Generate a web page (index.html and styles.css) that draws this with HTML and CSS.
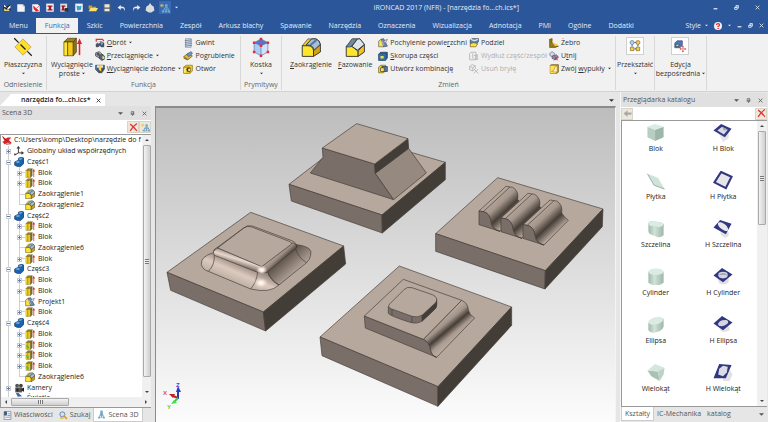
FILE: index.html
```html
<!DOCTYPE html>
<html lang="pl">
<head>
<meta charset="utf-8">
<title>IRONCAD 2017</title>
<link rel="stylesheet" href="styles.css">
</head>
<body>
<svg class="sprite" aria-hidden="true">
  <symbol id="app" viewBox="0 0 16 16"><path d="M1 2l6 4 7-4-1 6 2 5H2z" fill="#222"/><path d="M2 2l6 6-5-1zM9 9l5-5v5l-6 3z" fill="#fff"/><path d="M3 9l4 3 5-1v3H3z" fill="#e8d37b"/></symbol>
  <symbol id="doc" viewBox="0 0 16 16"><path d="M2 2h9l3 3v9H2z" fill="#f5f5f5"/><path d="M11 2v3h3" fill="none" stroke="#aaa"/></symbol>
  <symbol id="docred" viewBox="0 0 16 16"><path d="M2 2h9l3 3v9H2z" fill="#f5f5f5"/><path d="M4 5l8 7-4 1-3-3zM9 8l4-3" stroke="#d22" fill="#d22"/></symbol>
  <symbol id="doci" viewBox="0 0 16 16"><path d="M2 1h12v13H2z" fill="#f5f5f5"/><path d="M4 4h8v2h-2v4h2v2H4v-2h2V6H4z" fill="#a01722"/></symbol>
  <symbol id="dock" viewBox="0 0 16 16"><path d="M2 1h11v13H2z" fill="#ddd"/><path d="M4 4h6v2H8v4h2v2H4v-2h1V6H4z" fill="#a01722"/><path d="M9 8h6v6H9z" fill="#333"/></symbol>
  <symbol id="docblue" viewBox="0 0 16 16"><path d="M2 1h12v13H2z" fill="#f5f5f5"/><path d="M4 4l5 1 3-1-1 7-6 1z" fill="#37a0d0"/></symbol>
  <symbol id="open" viewBox="0 0 16 16"><path d="M1 4h5l1 2h6v3H1z" fill="#d99a1e"/><path d="M4 8h12l-3 5H1z" fill="#ffe069"/></symbol>
  <symbol id="save" viewBox="0 0 16 16"><path d="M2 1h12v14H2z" fill="#555b66"/><path d="M4 2h8v5H4zM4 9h8v4H4z" fill="#e8e8e8"/></symbol>
  <symbol id="undo" viewBox="0 0 16 16"><path d="M6 3L1 7l5 4V8.500h3q3 0 3 5 3-8-6-8z" fill="#e9edf5"/></symbol>
  <symbol id="redo" viewBox="0 0 16 16"><path d="M10 3l5 4-5 4V8.500H7q-3 0-3 5-3-8 6-8z" fill="#e9edf5"/></symbol>
  <symbol id="drop" viewBox="0 0 16 16"><path d="M8 0q2 4 6 6l1 6-5 3H6l-5-3 1-6q5-2 6-6z" fill="#dcdcdc"/></symbol>
  <symbol id="tree" viewBox="0 0 16 16"><path d="M10 3v4M8 7h4M8 7l-3 6M12 7l3 6M10 7v7M6 10h8" stroke="#6f9fc4" stroke-width="1.500" fill="none"/><path d="M8 2h4v4H8zM3 12h4v3H3zM12 12h4v3h-4zM8 12h3v3H8z" fill="#76a9cd"/><path d="M3 1v6M0 4h6M1 2l4 4M5 2L1 6" stroke="#f0c23c"/></symbol>
  <symbol id="plane" viewBox="0 0 32 32"><path d="M16 3l13 13-13 13L3 16z" fill="#ffdf2e" stroke="#c2a75c" stroke-width="1.500"/><path d="M2 2l7 7M12 12l8 8M23 23l7 7" stroke="#1e1e1e" stroke-width="2"/></symbol>
  <symbol id="block" viewBox="0 0 32 32"><path d="M3 8l6-6h14l-5 6z" fill="#9b8418" stroke="#42380c"/><path d="M3 8h6v22H3z" fill="#ffe838" stroke="#42380c"/><path d="M9 8h9v22H9z" fill="#f5ca20" stroke="#42380c"/><path d="M18 8l5-6v22l-5 6z" fill="#8c7418" stroke="#42380c"/><path d="M28 29V8" stroke="#e3242b" stroke-width="2.500"/><path d="M24 11l4-9 4 9z" fill="#e3242b"/></symbol>
  <symbol id="blockg" viewBox="0 0 32 32"><use href="#block"/><path d="M4 15l8 6v6l-8-3z" fill="#4eb95c"/></symbol>
  <symbol id="cube" viewBox="0 0 32 32"><path d="M5 9l11 5v16L5 24z" fill="#a9cdf6"/><path d="M16 14l11-5v15l-11 6z" fill="#cfe2fb"/><path d="M5 9l11-6 11 6-11 5z" fill="#5674cc"/><path d="M5 9l11-6 11 6-11 5zM5 9v15l11 6 11-6V9M16 14v16" fill="none" stroke="#5b6b9b"/><path d="M3 7h4v4H3zM14 1h4v4h-4zM25 7h4v4h-4zM14 12h4v4h-4zM14 28h4v4h-4zM3 22h4v4H3zM25 22h4v4h-4z" fill="#e22c38"/></symbol>
  <symbol id="round" viewBox="0 0 32 32"><path d="M2 14L11 3h13q6 2 7 9l-7 8z" fill="#ecc92f" stroke="#333"/><path d="M2 14h9q8 0 9 8v9H2z" fill="#ffe62c" stroke="#333" stroke-width="1.500"/><path d="M8 13L17 3h7q6 2 7 9L21 22q-1-8-8-9z" fill="#a9bed0" stroke="#333" stroke-width="1.500"/><path d="M14 12l9-8 3 2-9 7z" fill="#4c79a4"/><path d="M20 22l11-10v12l-11 7z" fill="#d5a214" stroke="#333" stroke-width="1.500"/></symbol>
  <symbol id="chamfer" viewBox="0 0 32 32"><path d="M2 15L12 3h12l7 9-10 9z" fill="#f7d83b" stroke="#333"/><path d="M2 15h9l10 8v8H2z" fill="#ffe62c" stroke="#333" stroke-width="1.500"/><path d="M11 3h9L9 16H2z" fill="#6c8bac" stroke="#333"/><path d="M20 3h4l7 9-11 9-9-6z" fill="#dce5ea" stroke="#333" stroke-width="1.500"/><path d="M21 22l10-10v12l-10 7z" fill="#f0c41c" stroke="#333" stroke-width="1.500"/></symbol>
  <symbol id="revolve" viewBox="0 0 16 16"><path d="M2 6V2h10l2 3" fill="none" stroke="#d33" stroke-width="2"/><path d="M2 10q5-7 12-2v6h-4q-2-4-5 0H2z" fill="#3b5676" stroke="#222"/><path d="M9 7h4l-2 5z" fill="#9fb8cf"/><path d="M4 7l4-2 1 2-4 2z" fill="#e7ebef"/></symbol>
  <symbol id="sweep" viewBox="0 0 16 16"><path d="M1 3l6-2 5 5-5 5-6-3z" fill="#b7bcc0" stroke="#222"/><circle cx="5" cy="5" r="2.500" fill="#555"/><path d="M7 7l4-2 4 3v5l-4 2-4-3z" fill="#4c6a94" stroke="#222"/><path d="M12 8l3 1v3l-3 1z" fill="#ffe24c"/></symbol>
  <symbol id="loft" viewBox="0 0 16 16"><path d="M1 2h14v6l-4 6H6L1 9z" fill="#3e5372" stroke="#333"/><path d="M3 2h10v4H3z" fill="#dfe5ea"/><path d="M6 3h4v9L6 9z" fill="#ffda31"/><path d="M2 3v6l3 3" stroke="#6f97d0" fill="none"/></symbol>
  <symbol id="thread" viewBox="0 0 16 16"><path d="M4 1h9v14H4z" fill="#e6ebf3" stroke="#7b89a4"/><path d="M3 4l11-1M3 7l11-1M3 10l11-1M3 13l11-1" stroke="#62799f" stroke-width="1.500"/></symbol>
  <symbol id="thick" viewBox="0 0 16 16"><path d="M1 9l7-5 7 4-7 6z" fill="#ddb938" stroke="#5d4b12"/><path d="M6 5l7-4 2 3-6 5z" fill="#6e9ad1" stroke="#345"/><path d="M1 9v3l6 3 1-2z" fill="#8c741c"/></symbol>
  <symbol id="hole" viewBox="0 0 16 16"><path d="M1 5l4-3h10v9l-4 4H1z" fill="#f3cd25" stroke="#7d6710"/><path d="M1 5h10v10" fill="none" stroke="#7d6710"/><circle cx="9" cy="9" r="3.500" fill="#40381c"/><circle cx="10" cy="9" r="2" fill="#ffe974"/><path d="M3 7v7" stroke="#fff7a8" stroke-width="2"/></symbol>
  <symbol id="draft" viewBox="0 0 16 16"><path d="M1 5l4-3 3 3 1 9H1z" fill="#ffe04a" stroke="#555"/><path d="M5 2l4-1 6 12-6 1z" fill="#6489b6" stroke="#445"/><path d="M9 5l6-3-3 6z" fill="#e8f0f6" stroke="#667"/><path d="M6 4l3 8" stroke="#dfe9f2"/></symbol>
  <symbol id="shell" viewBox="0 0 16 16"><path d="M1 5l3-3h11v9l-3 4H1z" fill="#26598f" stroke="#17324d"/><path d="M1 5h11v10H1z" fill="#346fa4"/><path d="M4 8h5v4H4z" fill="#f5dc4e"/></symbol>
  <symbol id="combine" viewBox="0 0 16 16"><path d="M1 5l3-3h8v9l-3 3H1z" fill="#ffdb2b" stroke="#5a4a10"/><path d="M6 4h9v8H8z" fill="#4d78ae" stroke="#234"/><path d="M4 6h6v6H4z" fill="#f5e06a" stroke="#333"/></symbol>
  <symbol id="split" viewBox="0 0 16 16"><path d="M2 3l3-2h10v5l-3 3H2z" fill="#5a83b8" stroke="#234"/><path d="M3 2q6 4 11 0" stroke="#dfe9f5" fill="none" stroke-width="2"/><path d="M2 9q5-3 12 0l-3 5H2z" fill="#ffe14b" stroke="#66540f"/></symbol>
  <symbol id="extend" viewBox="0 0 16 16"><path d="M3 2h8v12H1V4zM6 4v8M8 7h5l-4 6h6M13 5v8" fill="none" stroke="#b9b9b9" stroke-width="1.500"/></symbol>
  <symbol id="delbody" viewBox="0 0 16 16"><path d="M1 4l4-3 5 2v5l-4 3-5-2zM1 4l5 2 4-3M6 6v5M8 8l7 7M15 8l-7 7" fill="none" stroke="#b9b9b9" stroke-width="1.500"/></symbol>
  <symbol id="rib" viewBox="0 0 16 16"><path d="M1 2l4-1v8l4 3 6 1-5 2H1z" fill="#9a8218" stroke="#4b3f10"/><path d="M5 3q2 6 8 7l2 2-5 1-5-4z" fill="#f3cd35"/><path d="M3 4l5 9" stroke="#556"/></symbol>
  <symbol id="trim" viewBox="0 0 16 16"><path d="M1 4l4-3 4 3-2 5-5-1z" fill="#d7dce8" stroke="#57607d"/><path d="M5 8l7-2 3 4-4 4-6-2z" fill="#8491b4" stroke="#3f4769"/><path d="M9 9l5 6M14 9l-6 6" stroke="#cc2b37" stroke-width="1.500"/></symbol>
  <symbol id="emboss" viewBox="0 0 16 16"><path d="M2 2l2-1h11v12l-3 2H2z" fill="#c8961e" stroke="#5e4710"/><path d="M2 3h9v12H2z" fill="#ffe05a"/><path d="M4 12Q9 11 10 4l3-1v10z" fill="#fff8c4" stroke="#aa8a22"/></symbol>
  <symbol id="transform" viewBox="0 0 24 24"><circle cx="7" cy="6" r="3.500" fill="#b7cff0" stroke="#47618e"/><circle cx="17" cy="6" r="3.500" fill="#f5cf45" stroke="#6e5614"/><path d="M4 14h6v6H4zM14 14h6v6h-6z" fill="#f5cf45" stroke="#6e5614"/><path d="M11 6h3M7 10v3M17 10v3M11 17h3" stroke="#4368a1" stroke-width="2"/></symbol>
  <symbol id="direct" viewBox="0 0 24 24"><path d="M3 7l4-4h9v8l-4 4H3z" fill="#4e78bd" stroke="#263e68"/><path d="M5 9h5v4H5z" fill="#dcd267" stroke="#263e68"/><path d="M17 12v10M12 17h10" stroke="#d64c4c"/><path d="M15 14l2-3 2 3zM15 20l2 3 2-3zM14 15l-3 2 3 2zM20 15l3 2-3 2z" fill="#d64c4c"/></symbol>
  <symbol id="root" viewBox="0 0 16 16"><path d="M0 2l6 4 3-2 6 0-4 4 5 5-7-1-5 3-2-3-2-1 4-2z" fill="#e01e24"/><path d="M1 2l7 8M9 12l5 2-7 1z" stroke="#801015" fill="#fff"/></symbol>
  <symbol id="axes" viewBox="0 0 16 16"><path d="M7 11V3M7 11h7M7 11l-5 3" stroke="#333" stroke-width="1.500"/><path d="M4 4l3-4 3 4zM12 8l4 3-4 3zM0 15l1-4 3 3z" fill="#333"/></symbol>
  <symbol id="part" viewBox="0 0 16 16"><path d="M1 8l6-3V2l5-2 4 2v8l-5 5H5l-4-2z" fill="#1c62a8" stroke="#123c6e"/><path d="M7 3l4-2 3 1-4 3zM2 8l5-2 3 2-4 2z" fill="#67a7df"/></symbol>
  <symbol id="camera" viewBox="0 0 16 16"><circle cx="5" cy="4" r="3" fill="#555"/><circle cx="11" cy="4" r="3" fill="#444"/><path d="M2 7h11v8H2z" fill="#555"/><path d="M12 9l4-2v7l-4-2zM4 9h3v4H4z" fill="#222"/></symbol>
  <symbol id="light" viewBox="0 0 16 16"><path d="M3 0h4l6 5-7 1z" fill="#3768ad"/></symbol>
  <symbol id="props" viewBox="0 0 16 16"><path d="M2 1h12v14H2z" fill="#f9f9f9" stroke="#4b6387"/><path d="M2 1h5v7H2z" fill="#3f5874"/><path d="M8 5h5M8 8h5M4 11h9" stroke="#557"/></symbol>
  <symbol id="search" viewBox="0 0 16 16"><circle cx="6" cy="6" r="4.500" fill="#cfe3f5" stroke="#587da5" stroke-width="1.500"/><path d="M8 8l6 6" stroke="#d69b2b" stroke-width="3"/><path d="M2 11h6v3H2z" fill="#e6b84e"/></symbol>
  <symbol id="scene" viewBox="0 0 16 16"><path d="M8 2L4 14M8 2l4 12M8 2v12M5 9h6" stroke="#6798bd" stroke-width="1.500" fill="none"/><path d="M6 1h4v5H6zM2 12h4v3H2zM10 12h4v3h-4z" fill="#76a9cd"/></symbol>
  <symbol id="redx" viewBox="0 0 16 16"><path d="M2 2q6 4 12 12M14 1Q7 6 2 14" stroke="#e03434" stroke-width="2.200" fill="none"/></symbol>
  <symbol id="down" viewBox="0 0 8 8"><path d="M0 2h8L4 6z" fill="currentColor"/></symbol>
  <symbol id="up" viewBox="0 0 8 8"><path d="M0 6h8L4 2z" fill="currentColor"/></symbol>
  <symbol id="left" viewBox="0 0 8 8"><path d="M6 0v8L2 4z" fill="currentColor"/></symbol>
  <symbol id="right" viewBox="0 0 8 8"><path d="M2 0v8l4-4z" fill="currentColor"/></symbol>
  <symbol id="pin" viewBox="0 0 8 8"><path d="M2 1h4v4H2zM1 5h6M4 5v3M5 1v4" fill="none" stroke="currentColor"/></symbol>
  <symbol id="close" viewBox="0 0 8 8"><path d="M1 1l6 6M7 1L1 7" stroke="currentColor" stroke-width="1.300"/></symbol>
  <symbol id="min" viewBox="0 0 8 8"><path d="M1 6h6" stroke="currentColor" stroke-width="2"/></symbol>
  <symbol id="restore" viewBox="0 0 8 8"><path d="M1 4h4v3H1zM3 4V1h4v4H5M1 4h4M3 1.500h4" fill="none" stroke="currentColor" stroke-width="1.300"/></symbol>
  <symbol id="help" viewBox="0 0 16 16"><circle cx="8" cy="8" r="8" fill="#eef0f5"/><path d="M5 6q0-3 3-3t3 3q0 2-3 3v1" fill="none" stroke="#e02c2c" stroke-width="2.500"/><path d="M7 12h3v2H7z" fill="#e02c2c"/></symbol>
  <symbol id="back" viewBox="0 0 16 16"><path d="M8 2v4h7v4H8v4L1 8z" fill="#a9a9a9"/></symbol>
  <linearGradient id="mint"><stop offset="0" stop-color="#a2b9ae"/><stop offset=".4" stop-color="#d0e2d9"/><stop offset="1" stop-color="#9db5a9"/></linearGradient>
  <symbol id="s-block" viewBox="0 0 20 20"><path d="M1 4l8 3v12l-8-4z" fill="#b7cec2"/><path d="M9 7l9-3v11l-9 4z" fill="#9db6aa"/><path d="M1 4l8-3 9 3-9 3z" fill="#d9ebe2"/></symbol>
  <symbol id="s-plate" viewBox="0 0 20 20"><path d="M1 3l11 4 7 12-11-4z" fill="#cfe3d9"/><path d="M1 3l7 12 11 4" fill="none" stroke="#95aea2"/></symbol>
  <symbol id="s-slot" viewBox="0 0 20 20"><path d="M2 5q0-3 5-3l9 2q3 1 2 4v9q-3 3-7 2l-7-3q-2-1-2-3z" fill="url(#mint)"/><path d="M2 5q1-3 5-3l9 2q3 1 1 3-3 2-7 1L4 7Q2 6 2 5z" fill="#d9ebe2"/></symbol>
  <symbol id="s-cyl" viewBox="0 0 20 20"><path d="M2 5v11q2 3 8 3t8-3V5z" fill="url(#mint)"/><ellipse cx="10" cy="5" rx="8" ry="3.500" fill="#d9ebe2"/></symbol>
  <symbol id="s-ell" viewBox="0 0 20 20"><path d="M2 8v8q3 4 9 2t7-6V4z" fill="url(#mint)"/><ellipse cx="10" cy="6" rx="8.200" ry="3.800" transform="rotate(-14 10 6)" fill="#d9ebe2"/></symbol>
  <symbol id="s-poly" viewBox="0 0 20 20"><path d="M1 8l11 1 2 10-9-5z" fill="#a9c2b5"/><path d="M1 8l8-7 10 4-7 4z" fill="#d4e7dd"/><path d="M12 9l7-4-1 7-4 7z" fill="#bdd3c8"/></symbol>
  <symbol id="h-block" viewBox="0 0 20 20"><path d="M6 12l10-4v8l-6 4z" fill="#e4e4e8"/><path d="M0 8l8-7 11 5-7 9z" fill="#333681"/><path d="M4 8l5-4 6 3-4 5z" fill="#d8dbe4"/><path d="M9 4l6 3-4 1z" fill="#9aa0b8"/></symbol>
  <symbol id="h-plate" viewBox="0 0 20 20"><path d="M1 12L8 1l11 5-6 12z" fill="#e4e6ea" stroke="#333681" stroke-width="2.200"/></symbol>
  <symbol id="h-slot" viewBox="0 0 20 20"><path d="M7 12l9 2v4l-4 2-4-3z" fill="#e2e2e6"/><path d="M0 9l7-8 12 4-6 11z" fill="#333681"/><ellipse cx="10" cy="8" rx="6.500" ry="3" transform="rotate(38 10 8)" fill="#e5e7ec"/></symbol>
  <symbol id="h-cyl" viewBox="0 0 20 20"><path d="M4 11h12v5q-5 4-10 1z" fill="#dfdfe3"/><path d="M0 9l9-8 11 7-10 8z" fill="#333681"/><ellipse cx="10" cy="8.500" rx="5" ry="3.500" fill="#d3d6de"/><path d="M5 9q5-5 10 0-5-2-10 0z" fill="#8c90a0"/></symbol>
  <symbol id="h-ell" viewBox="0 0 20 20"><path d="M5 12h12v4q-5 3-9 1z" fill="#e3e3e7"/><path d="M0 9l9-8 11 7-10 8z" fill="#333681"/><ellipse cx="10" cy="8.500" rx="5.500" ry="3" transform="rotate(-18 10 8)" fill="#d3d6de"/></symbol>
  <symbol id="h-poly" viewBox="0 0 20 20"><path d="M10 10l7-3 3 5-3 7-7 0z" fill="#e0e0e5"/><path d="M0 16L6 1l13 1-6 14z" fill="#333681"/><path d="M5 12l1-6 4-3 5 1-1 6-4 4z" fill="#dadde5"/></symbol>
</svg>

<div class="app">
  <header class="title-bar">
    <div class="quick">
      <svg><use href="#app"/></svg>
      <button aria-label="Nowy"><svg><use href="#doc"/></svg></button>
      <button aria-label="Nowa scena"><svg><use href="#docred"/></svg></button>
      <button aria-label="Nowy rysunek"><svg><use href="#doci"/></svg></button>
      <button aria-label="Szablon"><svg><use href="#dock"/></svg></button>
      <button aria-label="Importuj"><svg><use href="#docblue"/></svg></button>
      <button aria-label="Otwórz"><svg><use href="#open"/></svg></button>
      <button aria-label="Zapisz"><svg><use href="#save"/></svg></button>
      <button aria-label="Cofnij"><svg><use href="#undo"/></svg></button>
      <button aria-label="Ponów"><svg><use href="#redo"/></svg></button>
      <button aria-label="Styl"><svg><use href="#drop"/></svg></button>
      <button class="on" aria-label="Drzewo sceny"><svg><use href="#tree"/></svg></button>
      <button class="more" aria-label="Więcej"><svg class="tiny"><use href="#down"/></svg></button>
    </div>
    <h1>IRONCAD 2017 (NFR) - [narzędzia fo...ch.ics*]</h1>
    <div class="window-buttons">
      <button aria-label="Minimalizuj"><svg><use href="#min"/></svg></button>
      <button aria-label="Przywróć"><svg><use href="#restore"/></svg></button>
      <button aria-label="Zamknij"><svg><use href="#close"/></svg></button>
    </div>
  </header>

  <nav class="tabs">
    <button>Menu</button><button class="active">Funkcja</button><button>Szkic</button><button>Powierzchnia</button><button>Zespół</button><button>Arkusz blachy</button><button>Spawanie</button><button>Narzędzia</button><button>Oznaczenia</button><button>Wizualizacja</button><button>Adnotacja</button><button>PMI</button><button>Ogólne</button><button>Dodatki</button>
    <div class="tab-tools">
      <button>Style <svg class="tiny"><use href="#down"/></svg></button>
      <button aria-label="Pomoc"><svg class="help"><use href="#help"/></svg></button>
      <button aria-label="Opcje pomocy"><svg class="tiny"><use href="#down"/></svg></button>
      <button aria-label="Minimalizuj dokument"><svg class="small"><use href="#min"/></svg></button>
      <button aria-label="Przywróć dokument"><svg class="small"><use href="#restore"/></svg></button>
      <button aria-label="Zamknij dokument"><svg class="small"><use href="#close"/></svg></button>
    </div>
  </nav>

  <section class="ribbon">
    <div class="group g-ref">
      <div class="tools"><button class="big"><svg><use href="#plane"/></svg>Płaszczyzna<svg class="tiny"><use href="#down"/></svg></button></div>
      <h2>Odniesienie</h2>
    </div>
    <div class="group g-feature">
      <div class="tools">
        <button class="big"><svg><use href="#block"/></svg>Wyciągnięcie<span>proste <svg class="tiny"><use href="#down"/></svg></span></button>
        <div class="stack">
          <button><svg><use href="#revolve"/></svg><span><u>O</u>brót</span><svg class="tiny"><use href="#down"/></svg></button>
          <button><svg><use href="#sweep"/></svg><span><u>P</u>rzeciągnięcie</span><svg class="tiny"><use href="#down"/></svg></button>
          <button><svg><use href="#loft"/></svg><span><u>W</u>yciągnięcie złożone</span><svg class="tiny"><use href="#down"/></svg></button>
        </div>
        <div class="stack">
          <button><svg><use href="#thread"/></svg>Gwint</button>
          <button><svg><use href="#thick"/></svg>Pogrubienie</button>
          <button><svg><use href="#hole"/></svg>Otwór</button>
        </div>
      </div>
      <h2>Funkcja</h2>
    </div>
    <div class="group g-prim">
      <div class="tools"><button class="big"><svg><use href="#cube"/></svg>Kostka<svg class="tiny"><use href="#down"/></svg></button></div>
      <h2>Prymitywy</h2>
    </div>
    <div class="group g-change">
      <div class="tools">
        <button class="big"><svg><use href="#round"/></svg><span><u>Z</u>aokrąglenie</span></button>
        <button class="big"><svg><use href="#chamfer"/></svg><span><u>F</u>azowanie</span></button>
        <div class="stack">
          <button><svg><use href="#draft"/></svg><span>Pochylenie powie<u>r</u>zchni</span></button>
          <button><svg><use href="#shell"/></svg><span><u>S</u>korupa części</span></button>
          <button><svg><use href="#combine"/></svg><span>Utwórz kombinację</span></button>
        </div>
        <div class="stack">
          <button><svg><use href="#split"/></svg>Podziel</button>
          <button disabled><svg><use href="#extend"/></svg>Wydłuż część/zespół</button>
          <button disabled><svg><use href="#delbody"/></svg>Usuń bryłę</button>
        </div>
        <div class="stack">
          <button><svg><use href="#rib"/></svg>Żebro</button>
          <button><svg><use href="#trim"/></svg><span>U<u>t</u>nij</span></button>
          <button><svg><use href="#emboss"/></svg><span>Zwój <u>w</u>ypukły</span><svg class="tiny"><use href="#down"/></svg></button>
        </div>
      </div>
      <h2>Zmień</h2>
    </div>
    <div class="group g-trans"><div class="tools"><button class="big boxed"><svg><use href="#transform"/></svg>Przekształć<svg class="tiny"><use href="#down"/></svg></button></div></div>
    <div class="group g-direct"><div class="tools"><button class="big boxed"><svg><use href="#direct"/></svg>Edycja<span>bezpośrednia<svg class="tiny"><use href="#down"/></svg></span></button></div></div>
  </section>

  <main>
    <div class="doc-bar">
      <div class="doc-tab"><span>narzędzia fo...ch.ics*</span><button aria-label="Zamknij kartę"><svg class="small"><use href="#close"/></svg></button></div>
      <button class="doc-list" aria-label="Lista dokumentów"><svg class="small"><use href="#down"/></svg></button>
    </div>

    <aside class="pane scene-pane">
      <header><h2>Scena 3D</h2><svg class="small"><use href="#down"/></svg><svg class="small"><use href="#pin"/></svg><svg class="small"><use href="#close"/></svg></header>
      <div class="filter"><input aria-label="Filtruj scenę"><button aria-label="Wyczyść"><svg><use href="#redx"/></svg></button><button aria-label="Drzewo"><svg><use href="#tree"/></svg></button></div>
      <div class="tree-box">
        <ul class="tree">
          <li class="l0"><svg><use href="#root"/></svg>C:\Users\komp\Desktop\narzędzie do f</li>
          <li class="l1 first"><i class="plus"></i><svg><use href="#axes"/></svg>Globalny układ współrzędnych</li>
          <li class="l1"><i></i><svg><use href="#part"/></svg>Część1</li>
          <li class="l2"><i class="plus"></i><svg><use href="#block"/></svg>Blok</li>
          <li class="l2"><i class="plus"></i><svg><use href="#block"/></svg>Blok</li>
          <li class="l2"><svg><use href="#round"/></svg>Zaokrąglenie1</li>
          <li class="l2 last"><svg><use href="#round"/></svg>Zaokrąglenie2</li>
          <li class="l1"><i></i><svg><use href="#part"/></svg>Część2</li>
          <li class="l2"><i class="plus"></i><svg><use href="#block"/></svg>Blok</li>
          <li class="l2"><i class="plus"></i><svg><use href="#block"/></svg>Blok</li>
          <li class="l2"><svg><use href="#round"/></svg>Zaokrąglenie6</li>
          <li class="l2 last"><i class="plus"></i><svg><use href="#block"/></svg>Blok</li>
          <li class="l1"><i></i><svg><use href="#part"/></svg>Część3</li>
          <li class="l2"><i class="plus"></i><svg><use href="#block"/></svg>Blok</li>
          <li class="l2"><i class="plus"></i><svg><use href="#block"/></svg>Blok</li>
          <li class="l2"><svg><use href="#draft"/></svg>Projekt1</li>
          <li class="l2 last"><i class="plus"></i><svg><use href="#block"/></svg>Blok</li>
          <li class="l1"><i></i><svg><use href="#part"/></svg>Część4</li>
          <li class="l2"><i class="plus"></i><svg><use href="#block"/></svg>Blok</li>
          <li class="l2"><i class="plus"></i><svg><use href="#blockg"/></svg>Blok</li>
          <li class="l2"><i class="plus"></i><svg><use href="#blockg"/></svg>Blok</li>
          <li class="l2"><i class="plus"></i><svg><use href="#blockg"/></svg>Blok</li>
          <li class="l2 last"><svg><use href="#round"/></svg>Zaokrąglenie6</li>
          <li class="l1"><i class="plus"></i><svg><use href="#camera"/></svg>Kamery</li>
          <li class="l1 cut"><svg><use href="#light"/></svg>Światła</li>
        </ul>
        <div class="vbar"><svg><use href="#up"/></svg><div class="thumb"></div><svg><use href="#down"/></svg></div>
        <div class="hbar"><svg><use href="#left"/></svg><div class="thumb"></div><svg><use href="#right"/></svg></div>
      </div>
      <div class="bottom-tabs">
        <button><svg><use href="#props"/></svg>Właściwości</button><button><svg><use href="#search"/></svg>Szukaj</button><button class="active"><svg><use href="#scene"/></svg>Scena 3D</button>
      </div>
    </aside>

    <section class="viewport">
      <svg viewBox="156 108 459 314" preserveAspectRatio="xMidYMid meet" role="img" aria-label="Model">
        <defs>
          <linearGradient id="skirtF" gradientUnits="userSpaceOnUse" x1="255" y1="450" x2="225" y2="520"><stop offset="0" stop-color="#85766d"/><stop offset=".5" stop-color="#ddcabf"/><stop offset="1" stop-color="#b6a89c"/></linearGradient>
          <linearGradient id="skirtR" gradientUnits="userSpaceOnUse" x1="370" y1="445" x2="415" y2="495"><stop offset="0" stop-color="#51483f"/><stop offset="1" stop-color="#b3a499"/></linearGradient>
          <linearGradient id="rimF" gradientUnits="userSpaceOnUse" x1="253" y1="438" x2="245" y2="464"><stop offset="0" stop-color="#b6a89c"/><stop offset=".4" stop-color="#e8d7cc"/><stop offset="1" stop-color="#85786f"/></linearGradient>
          <linearGradient id="rimR" gradientUnits="userSpaceOnUse" x1="360" y1="432" x2="380" y2="454"><stop offset="0" stop-color="#b6a89c"/><stop offset=".5" stop-color="#9b8c82"/><stop offset="1" stop-color="#4c433c"/></linearGradient>
          <linearGradient id="ribG" gradientUnits="userSpaceOnUse" x1="222" y1="112" x2="281" y2="176"><stop offset="0" stop-color="#b6a89c"/><stop offset=".3" stop-color="#a6978c"/><stop offset=".62" stop-color="#463e37"/><stop offset=".95" stop-color="#b2a398"/></linearGradient>
          <linearGradient id="stepG" gradientUnits="userSpaceOnUse" x1="395" y1="192" x2="440" y2="246"><stop offset="0" stop-color="#b6a89c"/><stop offset=".25" stop-color="#a39489"/><stop offset=".52" stop-color="#453d36"/><stop offset=".8" stop-color="#aa9b90"/><stop offset="1" stop-color="#b6a89c"/></linearGradient>
          <radialGradient id="shine"><stop offset="0" stop-color="#fff"/><stop offset=".4" stop-color="#f8e8dd"/><stop offset="1" stop-color="#dccabf" stop-opacity="0"/></radialGradient>
        </defs>
        <g class="solid" transform="translate(280 110) scale(.3333)">
          <path class="top" d="M27 223L200 90L400 129L496 157L306 315z"/>
          <path class="front" d="M27 223L306 315L307 369L34 273z"/>
          <path class="side" d="M306 315L496 157V209L307 369z"/>
          <path class="front" d="M127 114L284 162L286 190L341 269L91 189L129 142z"/>
          <path class="slope" d="M286 190L386 115L439 189L341 269z"/>
          <path class="side" d="M284 162L384 86L386 115L286 190z"/>
          <path class="top" d="M127 114L230 41L384 86L284 162z"/>
        </g>
        <g class="solid" transform="translate(155 110) scale(.3333)">
          <path class="top" d="M36 487L287 307L566 408L325 606z"/>
          <path class="front" d="M36 487L325 606L332 663L47 541z"/>
          <path class="side" d="M325 606L566 408L572 462L332 663z"/>
          <path fill="url(#skirtF)" d="M175 428Q136 440 139 464Q143 479 160 484L287 537Q345 551 372 525L330 470z"/>
          <path fill="url(#skirtR)" d="M320 470L425 404Q476 410 467 436Q465 448 455 458L372 525Q345 510 338 485z"/>
          <path fill="none" d="M178 434Q180 465 160 484M308 485Q306 515 287 537M338 485Q345 510 372 525M420 412Q430 445 455 458"/>
          <path fill="url(#rimF)" d="M186 413L320 468L313 489L178 436Q170 420 186 413z"/>
          <path fill="url(#rimR)" d="M320 468L408 399Q426 398 425 414L334 488L313 489z"/>
          <path class="top" d="M186 413L268 353Q278 346 290 351L400 393Q416 399 406 405L320 470z"/>
          <path fill="none" d="M175 424L266 354Q277 344 292 348L410 392Q428 399 425 414"/>
          <ellipse class="glow" cx="320" cy="480" rx="17" ry="14" fill="url(#shine)"/><ellipse class="glow" cx="318" cy="519" rx="22" ry="16" fill="url(#shine)"/>
        </g>
        <g class="solid" transform="translate(420 160) scale(.3333)">
          <path class="top" d="M47 221L233 53L549 147L376 332z"/>
          <path class="front" d="M47 221L376 332L375 387L47 274z"/>
          <path class="side" d="M376 332L549 147L547 200L375 387z"/>
          <g id="rib-solid">
            <path fill="url(#ribG)" d="M177 153L258 79L278 82Q297 93 293 118Q300 130 313 140L240 214Q216 209 213 185Q208 158 190 155z"/>
            <path class="front" d="M177 153L190 155Q211 160 213 188Q217 209 240 214L177 194z"/>
            <path fill="none" d="M190 155L270 81"/>
          </g>
          <use href="#rib-solid" x="66" y="21"/>
          <use href="#rib-solid" x="132" y="41"/>
        </g>
        <g class="solid" transform="translate(310 255) scale(.3333)">
          <path class="top" d="M30 246L268 33L605 156L384 395z"/>
          <path class="front" d="M30 246L384 395V454L36 302z"/>
          <path class="side" d="M384 395L605 156V211L384 454z"/>
          <path fill="url(#stepG)" d="M340 253L455 136Q474 144 475 165Q479 181 494 189L380 307Q362 301 361 282Q358 262 340 253z"/>
          <path class="front" d="M163 183L340 253Q358 262 361 283Q364 302 380 307L166 219z"/>
          <path class="top" d="M163 183L280 73L455 136L340 253z"/>
          <path class="front" d="M235 155V175Q240 183 300 202Q322 208 336 198L377 160Q381 155 380 133z"/>
          <path class="side" d="M336 181L380 138V150Q380 157 375 162L336 199z"/>
          <path class="top" d="M240 146L282 104Q291 94 306 98L367 119Q387 128 377 143L337 180Q324 189 306 184L245 162Q230 156 240 146z"/>
          <path fill="none" d="M246 163V181M306 185V203"/>
        </g>
        <g class="triad">
          <path d="M178 399v-9" stroke="#2c37c8" stroke-width="2"/><path d="M176 392l2-6 3 6z" fill="#2c37c8"/>
          <path d="M178 398l-5-2" stroke="#c02222" stroke-width="2"/><path d="M169 394l6 0-2 4z" fill="#c02222"/>
          <path d="M178 398l-4 4" stroke="#45c84a" stroke-width="2"/><path d="M171 404l6-1-3-3z" fill="#45e04a"/>
          <text x="176" y="387" fill="#3a40e0">Z</text><text x="163" y="395" fill="#e05050">X</text><text x="167" y="409" fill="#45d04a">Y</text>
        </g>
      </svg>
    </section>

    <aside class="pane catalog-pane">
      <header><h2>Przeglądarka katalogu</h2><svg class="small"><use href="#down"/></svg><svg class="small"><use href="#pin"/></svg><svg class="small"><use href="#close"/></svg></header>
      <div class="filter"><button aria-label="Wstecz"><svg><use href="#back"/></svg></button><input aria-label="Szukaj w katalogu"><button aria-label="Wyczyść"><svg><use href="#redx"/></svg></button></div>
      <div class="catalog">
        <ul>
          <li><svg><use href="#s-block"/></svg>Blok</li><li><svg><use href="#h-block"/></svg>H Blok</li>
          <li><svg><use href="#s-plate"/></svg>Płytka</li><li><svg><use href="#h-plate"/></svg>H Płytka</li>
          <li><svg><use href="#s-slot"/></svg>Szczelina</li><li><svg><use href="#h-slot"/></svg>H Szczelina</li>
          <li><svg><use href="#s-cyl"/></svg>Cylinder</li><li><svg><use href="#h-cyl"/></svg>H Cylinder</li>
          <li><svg><use href="#s-ell"/></svg>Ellipsa</li><li><svg><use href="#h-ell"/></svg>H Ellipsa</li>
          <li><svg><use href="#s-poly"/></svg>Wielokąt</li><li><svg><use href="#h-poly"/></svg>H Wielokąt</li>
        </ul>
        <div class="vbar"><svg><use href="#up"/></svg><div class="thumb"></div><svg><use href="#down"/></svg></div>
      </div>
      <div class="bottom-tabs">
        <button class="active">Kształty</button><button>IC-Mechanika</button><button>katalog</button><button class="end" aria-label="Więcej katalogów"><svg class="small"><use href="#down"/></svg></button>
      </div>
    </aside>
  </main>
</div>
</body>
</html>
```

FILE: styles.css
```css
* { box-sizing: border-box; }
body { margin: 0; font: 7px/10px "Open Sans", "Noto Sans", sans-serif; color: #333; background: #e6e6e6; }
button { font: inherit; color: inherit; background: none; border: 0; padding: 0; display: flex; align-items: center; white-space: nowrap; }
input { font: inherit; border: 0; padding: 0; min-width: 0; }
h1, h2 { font: inherit; margin: 0; white-space: nowrap; }
ul { list-style: none; margin: 0; padding: 0; }
svg { display: block; flex: none; width: 10px; height: 10px; }
.sprite { position: absolute; width: 0; height: 0; }
svg.small { width: 5px; height: 5px; }
svg.tiny { width: 3px; height: 3px; }

.app { display: flex; flex-direction: column; height: 100vh; overflow: hidden; }

.title-bar { display: grid; grid-template-columns: 3fr auto 2fr; align-items: center; height: 15px; background: #2b579a; color: #e4ebf6; }
.quick { display: flex; align-items: center; justify-content: space-between; width: 181px; padding-left: 1px; }
.quick > * { width: 12px; height: 13px; justify-content: center; padding: 2px 1px; }
.quick button { padding: 0; }
.quick .on { background: #376ab5; }
.quick .more { width: 8px; color: #fff; }
.window-buttons { display: flex; justify-content: flex-end; gap: 16px; padding-right: 8px; }
.window-buttons svg { width: 5px; height: 5px; }

.tabs { display: flex; height: 19px; padding-top: 3px; background: #2b579a; color: #e4ebf6; border-bottom: 1px solid #2b579a; }
.tabs > button { padding: 0 8px 0 9px; }
.tabs .active { background: #f1f1f1; color: #2b6cc4; }
.tab-tools { display: flex; align-items: center; gap: 6px; margin-left: auto; padding-right: 4px; }
.tab-tools button { gap: 4px; }
.tab-tools .help { width: 8px; height: 8px; }

.ribbon { display: flex; height: 58px; background: #f1f1f1; border-bottom: 1px solid #d2d2d2; }
.group { display: flex; flex-direction: column; justify-content: space-between; margin: 2px 0 1px; border-right: 1px solid #d8d8d8; }
.group h2 { text-align: center; color: #666; }
.tools { display: flex; }
.big { flex-direction: column; justify-content: flex-start; line-height: 9px; gap: 0; }
.big > svg:first-child { width: 20px; height: 20px; margin: 1px 0 3px; }
.big > .tiny { margin-top: 3px; }
.big span { display: flex; align-items: center; gap: 2px; }
.big span:has(u) { display: block; }
.boxed > svg:first-child { width: 16px; height: 16px; padding: 1px; margin: 2px 0 6px; background: #fff; outline: 1px solid #d0d0d0; }
.stack { display: flex; flex-direction: column; }
.stack button { height: 13px; gap: 2px; }
.stack .tiny { margin-left: 1px; }
.stack button:disabled { color: #b0b0b0; }
.g-ref { width: 47px; }
.g-ref .tools, .g-prim .tools, .g-trans .tools, .g-direct .tools { justify-content: center; }
.g-feature { width: 194px; }
.g-feature .tools { padding-left: 4px; gap: 2px; }
.g-prim { width: 41px; }
.g-change { width: 334px; }
.g-change .tools { padding-left: 8px; gap: 2px; }
.g-change .big { margin-right: 4px; }
.g-trans { width: 39px; }
.g-direct { width: 52px; }

main { flex: 1; min-height: 0; display: grid; grid-template: 14px minmax(0, 1fr) / 155px minmax(0, 1fr) 148px; }
.doc-bar { grid-column: 1 / 3; display: flex; justify-content: space-between; align-items: flex-end; padding-right: 6px; }
.doc-tab { display: flex; align-items: center; justify-content: space-between; width: 105px; height: 12px; padding: 0 4px 0 21px; background: #fff; clip-path: polygon(11px 0, 100% 0, 100% 100%, 0 100%); font-weight: 600; color: #222; }
.doc-list { height: 12px; }

.pane { display: grid; grid-template-rows: 14px 14px minmax(0, 1fr) 14px; min-width: 0; }
.scene-pane { padding-right: 4px; }
.catalog-pane { grid-area: 1 / 3 / 3 / 4; grid-template-rows: 14px 13px minmax(0, 1fr) 14px; padding: 1px 1px 1px 0; border-left: 1px solid #f6f6f6; }
.pane header { display: flex; align-items: center; gap: 7px; padding: 0 4px 0 2px; background: #e0e0e0; color: #555; }
.pane header h2 { flex: 1; }
.filter { display: flex; align-items: center; background: #fff; }
.filter input { flex: 1; align-self: stretch; }
.filter button { width: 12px; height: 12px; justify-content: center; background: #ece8dc; outline: 1px solid #d8d4c8; outline-offset: -1px; }
.filter button svg { width: 9px; height: 9px; }

.tree-box { display: grid; grid-template: minmax(0, 1fr) 10px / minmax(0, 1fr) 9px; background: #fff; border: 1px solid #999; border-width: 1px 0 1px 1px; }
.tree { display: grid; grid-template-rows: repeat(24, minmax(0, 1fr)) 4px; overflow: hidden; color: #222; }
.tree li { position: relative; display: flex; align-items: center; gap: 3px; white-space: nowrap; min-width: 0; }
.tree .l0 { padding-left: 1px; gap: 2px; }
.tree .l1 { padding-left: 13px; }
.tree .l2 { padding-left: 24px; }
.tree .cut { align-items: flex-start; }
.tree li:not(.l0)::before { content: ""; position: absolute; left: 7px; top: 0; bottom: 0; border-left: 1px solid #d0d0d0; }
.tree .l2::after { content: ""; position: absolute; left: 18px; top: 0; bottom: 0; width: 5px; border-left: 1px solid #d0d0d0; background: linear-gradient(#d0d0d0, #d0d0d0) center / 100% 1px no-repeat; }
.tree .last::after { bottom: 50%; background-position: bottom; }
.tree i { position: absolute; z-index: 1; left: 5px; top: calc(50% - 2px); width: 5px; height: 5px; border: 1px solid #c3cad6; background: linear-gradient(#6b7ca0, #6b7ca0) center / 3px 1px no-repeat #fff; }
.tree .l2 i { left: 16px; }
.tree i.plus { background: linear-gradient(#6b7ca0, #6b7ca0) center / 3px 1px no-repeat, linear-gradient(#6b7ca0, #6b7ca0) center / 1px 3px no-repeat #fff; }

.vbar, .hbar { display: flex; align-items: center; background: #f0f0f0; color: #444; }
.vbar { flex-direction: column; }
.vbar svg, .hbar svg { width: 4px; height: 4px; margin: 3px; }
.thumb { border: 1px solid #aaa; border-radius: 1px; }
.vbar .thumb { width: 8px; flex: 1; background: repeating-linear-gradient(#777 0 1px, #eee 1px 2px) center / 4px 5px no-repeat, linear-gradient(90deg, #f2f2f2, #cfcfcf); }
.scene-pane .vbar .thumb { margin-bottom: 10px; }
.hbar { grid-column: 1 / 3; }
.hbar .thumb { width: 58px; height: 8px; margin-right: auto; background: repeating-linear-gradient(90deg, #777 0 1px, #eee 1px 2px) center / 5px 4px no-repeat, linear-gradient(#f2f2f2, #cfcfcf); }

.bottom-tabs { display: flex; color: #555; }
.bottom-tabs button { padding: 0 3px; gap: 2px; }
.bottom-tabs .active { background: #fff; border: 1px solid #ccc; border-top: 0; }
.bottom-tabs .end { margin-left: auto; }
.bottom-tabs svg:not(.small) { width: 9px; height: 9px; }

.viewport { margin-right: 4px; border: 2px solid #8b8b8b; border-width: 2px 1px 0 1px; border-right-color: #f4f4f4; background: linear-gradient(#bdbdbd, #fcfcfc); overflow: hidden; }
.viewport svg { width: 100%; height: 100%; }
.solid { stroke: #443d38; stroke-width: 2; stroke-linejoin: round; }
.top { fill: #b6a89c; }
.front { fill: #7a6e69; }
.side { fill: #433d38; }
.slope { fill: #958980; }
.glow { stroke: none; }
.triad text { font: bold 6px "Liberation Sans", sans-serif; }

.catalog { display: grid; grid-template-columns: minmax(0, 1fr) 10px; background: #fff; border: 1px solid #999; border-width: 1px 0 1px 1px; }
.catalog ul { display: grid; grid-template-columns: 1fr 1fr; grid-auto-rows: 48px; overflow: hidden; color: #222; }
.catalog li { display: flex; flex-direction: column; align-items: center; gap: 2px; padding-top: 2px; }
.catalog li svg { width: 20px; height: 19px; }
.catalog .thumb { flex: none; height: 94px; margin-bottom: auto; }
```
